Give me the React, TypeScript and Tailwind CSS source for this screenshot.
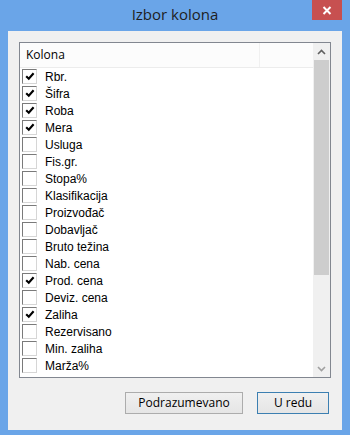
import React from "react";

const items: [string, boolean][] = [
  ["Rbr.", true],
  ["Šifra", true],
  ["Roba", true],
  ["Mera", true],
  ["Usluga", false],
  ["Fis.gr.", false],
  ["Stopa%", false],
  ["Klasifikacija", false],
  ["Proizvođač", false],
  ["Dobavljač", false],
  ["Bruto težina", false],
  ["Nab. cena", false],
  ["Prod. cena", true],
  ["Deviz. cena", false],
  ["Zaliha", true],
  ["Rezervisano", false],
  ["Min. zaliha", false],
  ["Marža%", false],
];

function Check({ on }: { on: boolean }) {
  return (
    <div className="w-[15px] h-[15px] shrink-0 bg-white border border-t-[#7a7a7a] border-l-[#7a7a7a] border-r-[#d6d6d6] border-b-[#d6d6d6] flex items-center justify-center">
      {on && (
        <svg width="10" height="9" viewBox="0 0 10 9">
          <path d="M1.2 4.2 L3.8 6.8 L8.6 1.2" stroke="#000" strokeWidth="2.1" fill="none" />
        </svg>
      )}
    </div>
  );
}

export default function App() {
  return (
    <div
      className="w-[350px] h-[435px] bg-[#6aa5e8] flex flex-col"
      style={{ fontFamily: "'Open Sans', 'Noto Sans', sans-serif" }}
    >
      <div className="relative h-[31px] flex items-center justify-center">
        <span className="text-[15px] text-[#1e1e1e] leading-none -mt-[2px]">Izbor kolona</span>
        <div className="absolute right-[8px] top-0 w-[30px] h-[20px] bg-[#c75050] flex items-center justify-center">
          <svg width="10" height="9" viewBox="0 0 10 9">
            <path d="M1.5 1 L8.5 8 M8.5 1 L1.5 8" stroke="#fff" strokeWidth="2" />
          </svg>
        </div>
      </div>
      <div className="mx-[8px] mb-[5px] flex-1 bg-[#f0f0f0] flex flex-col px-[11px] pt-[11px]">
        <div className="h-[336px] border border-[#828790] bg-white flex">
          <div className="flex-1 flex flex-col">
            <div className="h-[25px] flex border-b border-[#ececec] bg-[#fcfcfc]">
              <div className="w-[240px] border-r border-[#f0f0f0] flex items-center pl-[6px] text-[12px] text-black">
                Kolona
              </div>
              <div className="flex-1" />
            </div>
            <div
              className="flex flex-col pl-[2px]"
              style={{ fontFamily: "'Liberation Sans', Arial, sans-serif" }}
            >
              {items.map(([label, on]) => (
                <div key={label} className="h-[17px] flex items-center gap-[8px]">
                  <Check on={on} />
                  <span className="text-[12px] text-black leading-none">{label}</span>
                </div>
              ))}
            </div>
          </div>
          <div className="w-[17px] bg-[#f0f0f0] flex flex-col">
            <div className="h-[17px] flex items-center justify-center">
              <svg width="9" height="6" viewBox="0 0 9 6">
                <path d="M1 5 L4.5 1.5 L8 5" stroke="#606060" strokeWidth="1.6" fill="none" />
              </svg>
            </div>
            <div className="h-[215px] mx-[1px] bg-[#cdcdcd]" />
            <div className="flex-1" />
            <div className="h-[17px] flex items-center justify-center">
              <svg width="9" height="6" viewBox="0 0 9 6">
                <path d="M1 1 L4.5 4.5 L8 1" stroke="#a0a0a0" strokeWidth="1.6" fill="none" />
              </svg>
            </div>
          </div>
        </div>
        <div className="flex justify-end gap-[14px] mt-[14px] pr-[2px]">
          <button className="w-[118px] h-[22px] border border-[#acacac] bg-gradient-to-b from-[#f0f0f0] to-[#e5e5e5] text-[12px] text-black flex items-center justify-center">
            Podrazumevano
          </button>
          <button className="w-[72px] h-[22px] border border-[#3c7fb1] bg-gradient-to-b from-[#f0f0f0] to-[#e5e5e5] text-[12px] text-black flex items-center justify-center">
            U redu
          </button>
        </div>
      </div>
    </div>
  );
}
